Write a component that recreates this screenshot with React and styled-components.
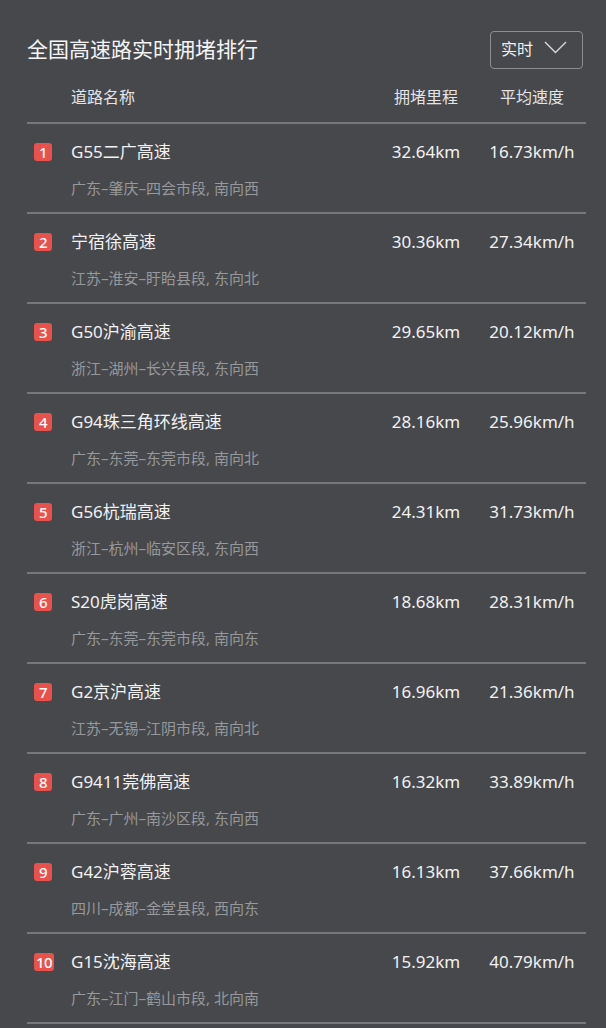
import styled, { createGlobalStyle } from "styled-components";

const ROADS = [
  { name: "G55二广高速", section: "广东–肇庆–四会市段, 南向西", length: "32.64km", speed: "16.73km/h" },
  { name: "宁宿徐高速", section: "江苏–淮安–盱眙县段, 东向北", length: "30.36km", speed: "27.34km/h" },
  { name: "G50沪渝高速", section: "浙江–湖州–长兴县段, 东向西", length: "29.65km", speed: "20.12km/h" },
  { name: "G94珠三角环线高速", section: "广东–东莞–东莞市段, 南向北", length: "28.16km", speed: "25.96km/h" },
  { name: "G56杭瑞高速", section: "浙江–杭州–临安区段, 东向西", length: "24.31km", speed: "31.73km/h" },
  { name: "S20虎岗高速", section: "广东–东莞–东莞市段, 南向东", length: "18.68km", speed: "28.31km/h" },
  { name: "G2京沪高速", section: "江苏–无锡–江阴市段, 南向北", length: "16.96km", speed: "21.36km/h" },
  { name: "G9411莞佛高速", section: "广东–广州–南沙区段, 东向西", length: "16.32km", speed: "33.89km/h" },
  { name: "G42沪蓉高速", section: "四川–成都–金堂县段, 西向东", length: "16.13km", speed: "37.66km/h" },
  { name: "G15沈海高速", section: "广东–江门–鹤山市段, 北向南", length: "15.92km", speed: "40.79km/h" },
];

const GlobalStyle = createGlobalStyle`
  html, body {
    margin: 0;
    padding: 0;
    background: #46484c;
  }
  body {
    font-family: "Noto Sans", "Noto Sans CJK SC", sans-serif;
  }
`;

const App = () => {
  return (
    <>
      <GlobalStyle />
      <Page>
        <TitleBar>
          <Title>全国高速路实时拥堵排行</Title>
          <Dropdown>
            <span>实时</span>
            <svg width="23" height="13" viewBox="0 0 23 13">
              <polyline
                points="1,1 11.5,11.5 22,1"
                fill="none"
                stroke="#d8d9db"
                strokeWidth="1.4"
              />
            </svg>
          </Dropdown>
        </TitleBar>
        <HeadRow>
          <span />
          <HeadCell>道路名称</HeadCell>
          <HeadCell $center>拥堵里程</HeadCell>
          <HeadCell $center>平均速度</HeadCell>
        </HeadRow>
        {ROADS.map((road, idx) => (
          <Row key={idx}>
            <Badge>{idx + 1}</Badge>
            <NameCell>
              <RoadName>{road.name}</RoadName>
              <Section>{road.section}</Section>
            </NameCell>
            <Value>{road.length}</Value>
            <Value>{road.speed}</Value>
          </Row>
        ))}
      </Page>
    </>
  );
};

const Page = styled.div`
  width: 559px;
  padding: 31px 20px 0 27px;
  background: #46484c;
  min-height: 1028px;
  box-sizing: content-box;
`;

const TitleBar = styled.div`
  display: flex;
  justify-content: space-between;
  align-items: center;
  height: 38px;
  padding-right: 3px;
`;

const Title = styled.h1`
  margin: 0;
  margin-top: -5px;
  font-size: 21px;
  font-weight: 400;
  color: #f4f4f5;
  font-family: "Noto Sans CJK SC", sans-serif;
`;

const Dropdown = styled.div`
  display: flex;
  align-items: center;
  justify-content: space-between;
  box-sizing: border-box;
  width: 93px;
  height: 38px;
  padding: 0 15px 0 10px;
  border: 1.5px solid #8b8d91;
  border-radius: 4px;
  font-family: "Noto Sans CJK SC", sans-serif;
  font-size: 16px;
  color: #eeeeef;

  span {
    margin-top: -5px;
  }

  svg {
    margin-top: -5px;
  }
`;

const HeadRow = styled.div`
  display: grid;
  grid-template-columns: 44px 1fr 104px 108px;
  align-items: center;
  height: 34px;
  margin-top: 10px;
  padding-bottom: 9px;
  border-bottom: 2px solid #76787c;
`;

const HeadCell = styled.span`
  font-family: "Noto Sans CJK SC", sans-serif;
  font-size: 16px;
  color: #e4e4e6;
  text-align: ${({ $center }) => ($center ? "center" : "left")};
`;

const Row = styled.div`
  display: grid;
  grid-template-columns: 44px 1fr 104px 108px;
  align-items: start;
  height: 90px;
  box-sizing: border-box;
  padding-top: 17px;
  border-bottom: 2px solid #76787c;
`;

const Badge = styled.span`
  justify-self: start;
  margin-left: 7px;
  margin-top: 2px;
  min-width: 18px;
  height: 18px;
  padding: 0 2px;
  box-sizing: border-box;
  border-radius: 3px;
  background: #e8514c;
  color: #fff;
  font-family: "Noto Sans", sans-serif;
  font-size: 15px;
  font-weight: 500;
  line-height: 18px;
  text-align: center;
  letter-spacing: -0.5px;
`;

const NameCell = styled.div`
  display: flex;
  flex-direction: column;
  gap: 14px;
`;

const RoadName = styled.span`
  font-size: 17px;
  line-height: 22px;
  color: #f1f1f2;
`;

const Section = styled.span`
  font-size: 15px;
  line-height: 22px;
  color: #97989b;
`;

const Value = styled.span`
  font-size: 17px;
  line-height: 22px;
  color: #f1f1f2;
  text-align: center;
  white-space: nowrap;
`;

export default App;
